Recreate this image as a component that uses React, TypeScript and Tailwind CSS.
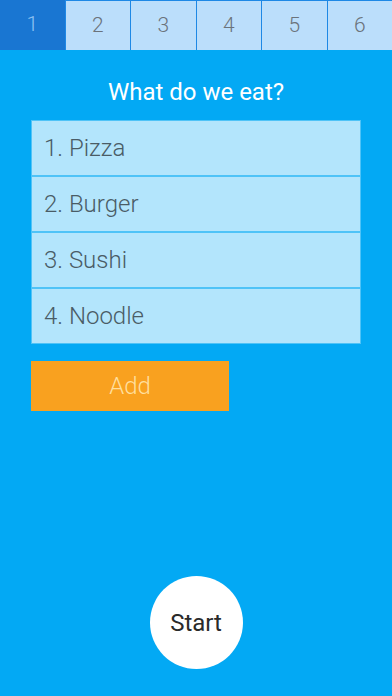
const tabs = [1, 2, 3, 4, 5, 6]
const items = ["1. Pizza", "2. Burger", "3. Sushi", "4. Noodle"]

const light = { fontFamily: "'Roboto Light', Roboto, 'Liberation Sans', sans-serif", fontWeight: 300 }

export default function App() {
  return (
    <div
      className="w-[392px] h-[696px] bg-[#03a9f4] flex flex-col overflow-hidden"
      style={{ fontFamily: "Roboto, 'Liberation Sans', sans-serif" }}
    >
      <div className="flex h-[50px] bg-[#1e88e5]">
        {tabs.map(t => (
          <div
            key={t}
            style={light}
            className={
              t === 1
                ? "flex-1 flex items-center justify-center bg-[#1976d2] text-[#8ec3f2] text-[21px]"
                : "flex-1 flex items-center justify-center bg-[#bbdefb] text-[#6b737b] text-[21px] border-l border-t border-[#1e88e5]"
            }
          >
            {t}
          </div>
        ))}
      </div>

      <h1 className="mt-[26px] text-center text-white text-[24px] leading-[32px]">What do we eat?</h1>

      <div className="mx-[31px] mt-[12px] flex flex-col">
        {items.map(item => (
          <div
            key={item}
            style={light}
            className="h-[56px] bg-[#b3e5fc] border border-[#4fc3f7] flex items-center pl-[12px] text-[24px] text-[#4a5c66]"
          >
            {item}
          </div>
        ))}
      </div>

      <button
        style={light}
        className="ml-[31px] mt-[17px] w-[198px] h-[50px] bg-[#f9a11f] text-[#ffdf9e] text-[24px]"
      >
        Add
      </button>

      <div className="flex-1" />

      <div className="flex justify-center mb-[27px]">
        <button className="w-[93px] h-[93px] rounded-full bg-white text-[#2a2a2a] text-[24px]">Start</button>
      </div>
    </div>
  )
}
